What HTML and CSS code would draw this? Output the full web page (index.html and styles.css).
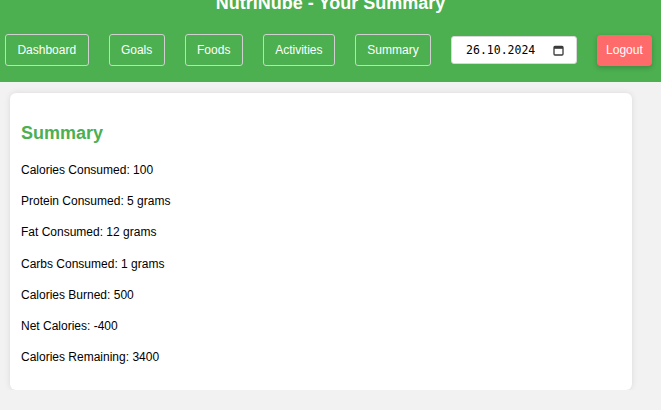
FILE: index.html
```html
<!DOCTYPE html>
<html lang="en">
<head>
<meta charset="utf-8">
<title>NutriNube - Your Summary</title>
<link rel="stylesheet" href="styles.css">
</head>
<body>
<header class="header">
  <h1 class="title">NutriNube - Your Summary</h1>
  <nav class="nav">
    <a class="nav-btn">Dashboard</a>
    <a class="nav-btn">Goals</a>
    <a class="nav-btn">Foods</a>
    <a class="nav-btn">Activities</a>
    <a class="nav-btn">Summary</a>
    <div class="date-field">
      <span class="date-text">26.10.2024</span>
      <svg class="cal-icon" width="11" height="11" viewBox="0 0 11 11">
        <rect x="1" y="1.5" width="9" height="8.5" rx="1" fill="none" stroke="#3a3a3a" stroke-width="1.3"/>
        <rect x="1" y="1.5" width="9" height="2.3" fill="#3a3a3a"/>
      </svg>
    </div>
    <button class="logout">Logout</button>
  </nav>
</header>
<main class="card">
  <h2 class="card-title">Summary</h2>
  <p class="line">Calories Consumed: 100</p>
  <p class="line">Protein Consumed: 5 grams</p>
  <p class="line">Fat Consumed: 12 grams</p>
  <p class="line">Carbs Consumed: 1 grams</p>
  <p class="line">Calories Burned: 500</p>
  <p class="line">Net Calories: -400</p>
  <p class="line">Calories Remaining: 3400</p>
</main>
</body>
</html>
```

FILE: styles.css
```css
html, body {
  margin: 0;
  padding: 0;
}
body {
  background: #f2f2f2;
  font-family: "Liberation Sans", Arial, sans-serif;
  font-size: 12px;
  color: #000;
  overflow: hidden;
}
.header {
  display: flow-root;
  background: #4caf50;
  height: 82px;
  box-sizing: border-box;
}
.title {
  margin: -7px 0 0;
  font-size: 18px;
  line-height: 20px;
  font-weight: bold;
  color: #fff;
  text-align: center;
}
.nav {
  display: flex;
  align-items: center;
  gap: 20px;
  padding-left: 5px;
  margin-top: 21px;
}
.nav-btn {
  display: inline-flex;
  align-items: center;
  height: 32px;
  box-sizing: border-box;
  padding: 0 11.4px;
  border: 1px solid #d0d0d0;
  border-radius: 3px;
  color: #fff;
  font-size: 12px;
  text-decoration: none;
}
.date-field {
  display: flex;
  align-items: center;
  width: 126px;
  height: 28px;
  box-sizing: border-box;
  background: #fff;
  border: 1px solid #d8d8d8;
  border-radius: 3px;
  padding: 0 0 0 14px;
}
.date-text {
  font-family: "DejaVu Sans Mono", monospace;
  font-size: 11.5px;
  color: #000;
}
.cal-icon {
  margin-left: 18px;
  display: block;
}
.logout {
  height: 31px;
  padding: 0 9px;
  border: none;
  border-radius: 4px;
  background: #ff6b6b;
  color: #fff;
  font-family: "Liberation Sans", Arial, sans-serif;
  font-size: 12px;
  box-shadow: 0 2px 5px rgba(0, 0, 0, 0.2);
}
.card {
  display: block;
  margin: 11px 29px 0 10px;
  background: #fff;
  border-radius: 6px;
  box-shadow: 0 0 6px rgba(0, 0, 0, 0.1);
  padding: 15px 10px 11px;
}
.card-title {
  margin: 15px 0 17px 1px;
  font-size: 18px;
  line-height: normal;
  color: #4caf50;
}
.line {
  margin: 12px 0 12px 1px;
  line-height: 1.6;
}
```
